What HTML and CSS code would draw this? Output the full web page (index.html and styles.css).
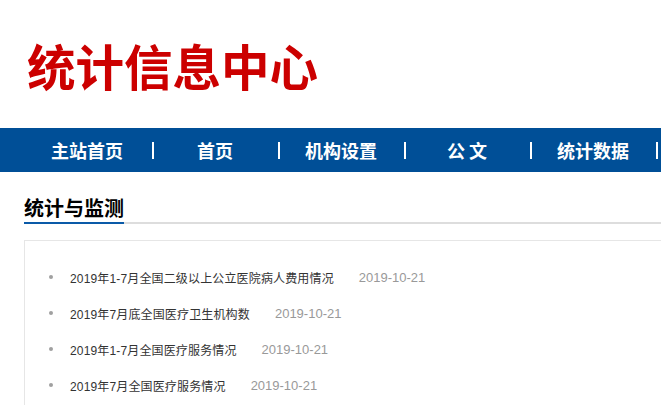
FILE: index.html
```html
<!DOCTYPE html>
<html lang="zh-CN">
<head>
<meta charset="utf-8">
<title>统计信息中心</title>
<link rel="stylesheet" href="styles.css">
</head>
<body>
<div class="page">
  <header class="header">
    <h1 class="site-title">统计信息中心</h1>
  </header>
  <nav class="nav">
    <ul class="nav-list">
      <li class="nav-item"><a class="nav-link" href="#">主站首页</a><span class="nav-sep"></span></li>
      <li class="nav-item"><a class="nav-link" href="#">首页</a><span class="nav-sep"></span></li>
      <li class="nav-item"><a class="nav-link" href="#">机构设置</a><span class="nav-sep"></span></li>
      <li class="nav-item"><a class="nav-link" href="#">公 文</a><span class="nav-sep"></span></li>
      <li class="nav-item"><a class="nav-link" href="#">统计数据</a><span class="nav-sep"></span></li>
    </ul>
  </nav>
  <section class="section">
    <div class="section-head">
      <h2 class="section-title">统计与监测</h2>
    </div>
    <div class="panel">
      <ul class="news-list">
        <li class="news-item"><span class="dot"></span><a class="news-link" href="#">2019年1-7月全国二级以上公立医院病人费用情况</a><span class="news-date">2019-10-21</span></li>
        <li class="news-item"><span class="dot"></span><a class="news-link" href="#">2019年7月底全国医疗卫生机构数</a><span class="news-date">2019-10-21</span></li>
        <li class="news-item"><span class="dot"></span><a class="news-link" href="#">2019年1-7月全国医疗服务情况</a><span class="news-date">2019-10-21</span></li>
        <li class="news-item"><span class="dot"></span><a class="news-link" href="#">2019年7月全国医疗服务情况</a><span class="news-date">2019-10-21</span></li>
      </ul>
    </div>
  </section>
</div>
</body>
</html>
```

FILE: styles.css
```css
html, body {
  margin: 0;
  padding: 0;
  background: #fff;
  overflow: hidden;
}
body {
  font-family: "Liberation Sans", "Noto Sans CJK SC", sans-serif;
  color: #333;
}
.page {
  width: 661px;
  overflow: hidden;
}
a {
  text-decoration: none;
}
.header {
  height: 128px;
  display: flex;
  align-items: center;
  padding-left: 27px;
}
.site-title {
  margin: 0;
  font-family: "Noto Sans CJK SC", sans-serif;
  font-size: 48.5px;
  font-weight: 700;
  color: #cc0000;
  letter-spacing: 0;
  line-height: 1;
  padding-top: 2px;
  white-space: nowrap;
}
.nav {
  height: 44px;
  background: #004f97;
}
.nav-list {
  list-style: none;
  margin: 0;
  padding: 0 0 0 28px;
  display: flex;
  height: 100%;
}
.nav-item {
  flex: 0 0 126px;
  width: 126px;
  display: flex;
  align-items: center;
}
.nav-item:first-child .nav-link {
  padding-right: 6px;
}
.nav-link {
  flex: 1;
  text-align: center;
  padding-right: 2px;
  color: #fff;
  font-family: "Noto Sans CJK SC", sans-serif;
  font-size: 18px;
  font-weight: 700;
  line-height: 44px;
  white-space: nowrap;
}
.nav-sep {
  width: 2px;
  height: 17px;
  background: #fff;
}
.section {
  padding: 24px 0 0 24px;
}
.section-head {
  border-bottom: 2px solid #dddddd;
  display: flex;
}
.section-title {
  margin: 0;
  font-family: "Noto Sans CJK SC", sans-serif;
  font-size: 20px;
  font-weight: 700;
  color: #000;
  line-height: 24px;
  padding-bottom: 2px;
  margin-bottom: -2px;
  border-bottom: 2px solid #0a5aa8;
}
.panel {
  margin-top: 16px;
  border: 1px solid #e6e6e6;
  border-right: 0;
  height: 300px;
}
.news-list {
  list-style: none;
  margin: 0;
  padding: 18px 0 0 24px;
}
.news-item {
  display: flex;
  align-items: center;
  height: 36px;
  font-size: 12px;
  letter-spacing: 0.15px;
  white-space: nowrap;
}
.dot {
  width: 4px;
  height: 4px;
  border-radius: 50%;
  background: #a0a0a0;
  margin-right: 17px;
}
.news-link {
  color: #333;
}
.news-date {
  margin-left: 25px;
  color: #999;
  font-size: 13px;
  letter-spacing: 0;
}
```
